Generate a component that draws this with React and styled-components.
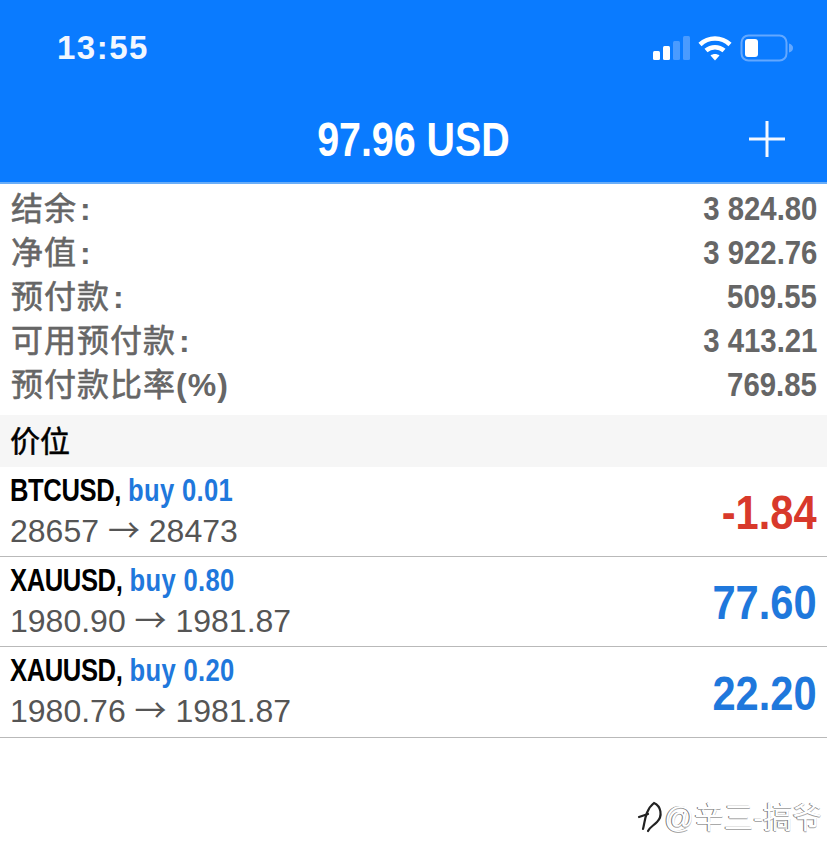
import styled, { createGlobalStyle } from "styled-components";

const GlobalStyle = createGlobalStyle`
  html, body {
    margin: 0;
    padding: 0;
    background: #fff;
  }
  body {
    font-family: "Liberation Sans", "Noto Sans CJK SC", sans-serif;
  }
`;

const Page = styled.div`
  width: 827px;
  height: 868px;
  overflow: hidden;
  display: flex;
  flex-direction: column;
  background: #fff;
`;

const Header = styled.header`
  height: 184px;
  box-sizing: border-box;
  flex: none;
  background: #0a7bff;
  border-bottom: 2px solid #6aaef8;
  color: #fff;
`;

const StatusBar = styled.div`
  display: flex;
  justify-content: space-between;
  align-items: center;
  height: 60px;
  padding: 18px 33px 0 57px;
`;

const Clock = styled.div`
  font-size: 33px;
  font-weight: 700;
  letter-spacing: 1.5px;
  color: #f2f7ff;
`;

const StatusIcons = styled.div`
  display: flex;
  align-items: center;
  gap: 8px;
`;

const TitleBar = styled.div`
  display: grid;
  grid-template-columns: 1fr auto 1fr;
  align-items: center;
  height: 70px;
  margin-top: 26px;
`;

const Squeezed = styled.span`
  display: inline-block;
  white-space: nowrap;
  transform: scaleX(${(p) => p.$x || 0.86});
  transform-origin: ${(p) => p.$origin || "left"} center;
`;

const Title = styled.h1`
  grid-column: 2;
  margin: 0;
  font-size: 48px;
  font-weight: 700;
  text-align: center;
`;

const PlusBox = styled.div`
  grid-column: 3;
  justify-self: end;
  display: flex;
  padding-right: 42px;
`;

const Summary = styled.section`
  padding: 3px 10px 8px 11px;
`;

const SummaryRow = styled.div`
  display: flex;
  justify-content: space-between;
  align-items: center;
  height: 44px;
  color: #666;
`;

const Label = styled.span`
  font-size: 32px;
  line-height: 40px;
  padding-bottom: 1px;
  font-weight: 400;
  letter-spacing: 1px;
  -webkit-text-stroke: 0.6px #666;
`;

const LabelMark = styled.b`
  margin-left: ${(p) => (p.$colon ? "3px" : "0")};
  font-weight: 700;
  -webkit-text-stroke: 0;
`;

const Amount = styled.span`
  font-size: 33px;
  font-weight: 700;
`;

const SectionHead = styled.div`
  height: 52px;
  box-sizing: border-box;
  display: flex;
  align-items: center;
  padding: 0 0 5px 10px;
  background: #f6f6f6;
  font-size: 30px;
  color: #000;
  -webkit-text-stroke: 0.5px #000;
`;

const Trade = styled.div`
  height: 89px;
  box-sizing: content-box;
  flex: none;
  display: flex;
  justify-content: space-between;
  align-items: center;
  padding: 0 10px;
  border-bottom: 1px solid #b9b9b9;

  &:last-of-type {
    height: 90px;
  }
`;

const TradeInfo = styled.div`
  display: flex;
  flex-direction: column;
  gap: 1px;
  margin-bottom: 2px;
`;

const TradeTitle = styled.div`
  font-size: 32px;
  line-height: 36px;
  font-weight: 700;
  color: #000;
`;

const Symbol = styled.span`
  letter-spacing: -0.5px;
`;

const Side = styled.span`
  color: #1f78dc;
  letter-spacing: 0.4px;
`;

const Prices = styled.div`
  font-size: 32px;
  line-height: 38px;
  color: #555;
  white-space: nowrap;
`;

const Arrow = styled.span`
  font-family: "Noto Sans CJK SC", sans-serif;
`;

const Profit = styled.div`
  font-size: 49px;
  font-weight: 700;
  margin-top: 1px;
  color: ${(p) => (p.$loss ? "#d8392b" : "#1f78dc")};
`;

const Footer = styled.footer`
  display: flex;
  justify-content: flex-end;
  align-items: center;
  gap: 1px;
  padding: 62px 5px 0 0;
`;

const Watermark = styled.span`
  font-size: 29.5px;
  line-height: 34px;
  color: #fff;
  white-space: nowrap;
  text-shadow: -1px 0 0 #777, 0 1px 0 #aaa;
`;

function SignalIcon() {
  return (
    <svg width="38" height="26" viewBox="0 0 38 26">
      <rect x="1" y="16" width="7" height="9" rx="1.5" fill="#fff" />
      <rect x="11" y="11" width="7" height="14" rx="1.5" fill="#fff" />
      <rect x="21" y="6" width="7" height="19" rx="1.5" fill="#4a9bff" />
      <rect x="31" y="1" width="7" height="24" rx="1.5" fill="#4a9bff" />
    </svg>
  );
}

function WifiIcon() {
  return (
    <svg width="34" height="26" viewBox="0 0 34 26" fill="none" stroke="#fff" strokeWidth="4.5">
      <path d="M2 9.5C10.5 1.5 23.5 1.5 32 9.5" />
      <path d="M8 15.5C13 11 21 11 26 15.5" />
      <path d="M12.5 20.5L17 25.5L21.5 20.5C19 18.5 15 18.5 12.5 20.5Z" fill="#fff" stroke="none" />
    </svg>
  );
}

function BatteryIcon() {
  return (
    <svg width="54" height="28" viewBox="0 0 54 28">
      <rect x="1.5" y="1.5" width="45" height="25" rx="7" fill="none" stroke="#63a8ff" strokeWidth="2" />
      <rect x="5" y="5" width="13" height="18" rx="3" fill="#fff" />
      <path d="M49 9.5C52 10.5 53 12 53 14C53 16 52 17.5 49 18.5Z" fill="#63a8ff" />
    </svg>
  );
}

function PlusIcon() {
  return (
    <svg width="36" height="36" viewBox="0 0 36 36" stroke="#f4f8ff" strokeWidth="3">
      <path d="M18 0V36M0 18H36" />
    </svg>
  );
}

function WatermarkLogo() {
  return (
    <svg width="26" height="36" viewBox="0 0 26 36" fill="none" stroke="#222" strokeWidth="2.2" strokeLinecap="round">
      <path d="M2 17L11 14" />
      <path d="M6 29C8 22 8 10 17 3C24 6 26 16 20 22C16 26 13 27 11 31" />
    </svg>
  );
}

const summary = [
  { label: "结余", mark: ":", colon: true, value: "3 824.80" },
  { label: "净值", mark: ":", colon: true, value: "3 922.76" },
  { label: "预付款", mark: ":", colon: true, value: "509.55" },
  { label: "可用预付款", mark: ":", colon: true, value: "3 413.21" },
  { label: "预付款比率", mark: "(%)", value: "769.85" },
];

const trades = [
  { symbol: "BTCUSD,", side: "buy 0.01", from: "28657", to: "28473", profit: "-1.84", loss: true },
  { symbol: "XAUUSD,", side: "buy 0.80", from: "1980.90", to: "1981.87", profit: "77.60" },
  { symbol: "XAUUSD,", side: "buy 0.20", from: "1980.76", to: "1981.87", profit: "22.20" },
];

export default function App() {
  return (
    <>
      <GlobalStyle />
      <Page>
        <Header>
          <StatusBar>
            <Clock>13:55</Clock>
            <StatusIcons>
              <SignalIcon />
              <WifiIcon />
              <BatteryIcon />
            </StatusIcons>
          </StatusBar>
          <TitleBar>
            <Title>
              <Squeezed $x={0.82} $origin="center">97.96 USD</Squeezed>
            </Title>
            <PlusBox>
              <PlusIcon />
            </PlusBox>
          </TitleBar>
        </Header>
        <Summary>
          {summary.map((row) => (
            <SummaryRow key={row.label}>
              <Label>
                {row.label}
                <LabelMark $colon={row.colon}>{row.mark}</LabelMark>
              </Label>
              <Amount>
                <Squeezed $x={0.89} $origin="right">{row.value}</Squeezed>
              </Amount>
            </SummaryRow>
          ))}
        </Summary>
        <SectionHead>价位</SectionHead>
        {trades.map((t) => (
          <Trade key={t.side}>
            <TradeInfo>
              <TradeTitle>
                <Squeezed $x={0.8}>
                  <Symbol>{t.symbol}</Symbol> <Side>{t.side}</Side>
                </Squeezed>
              </TradeTitle>
              <Prices>
                {t.from} <Arrow>→</Arrow> {t.to}
              </Prices>
            </TradeInfo>
            <Profit $loss={t.loss}>
              <Squeezed $x={0.85} $origin="right">{t.profit}</Squeezed>
            </Profit>
          </Trade>
        ))}
        <Footer>
          <WatermarkLogo />
          <Watermark>@辛三-搞爷</Watermark>
        </Footer>
      </Page>
    </>
  );
}
